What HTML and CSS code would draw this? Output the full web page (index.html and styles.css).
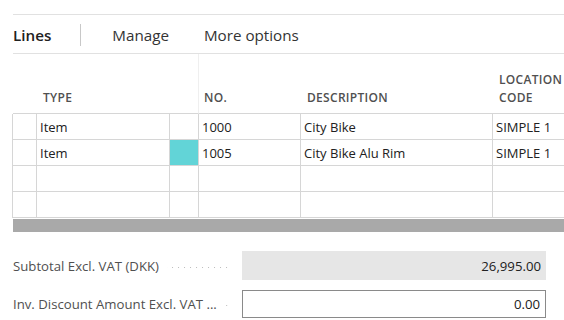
FILE: index.html
```html
<!DOCTYPE html>
<html lang="en">
<head>
    <meta charset="UTF-8">
    <title>Lines</title>
    <link rel="stylesheet" href="styles.css">
</head>
<body>

    <!-- Barra de acoes -->
    <div class="toolbar">
        <span class="tab active">Lines</span>
        <span class="divider"></span>
        <span class="tab">Manage</span>
        <span class="tab">More options</span>
    </div>

    <!-- Grade das linhas -->
    <div class="grid">
        <div class="head sel"></div>
        <div class="head">TYPE</div>
        <div class="head"></div>
        <div class="head ruled">NO.</div>
        <div class="head">DESCRIPTION</div>
        <div class="head">LOCATION<br>CODE</div>

        <div class="cell sel"></div>
        <div class="cell">Item</div>
        <div class="cell"></div>
        <div class="cell">1000</div>
        <div class="cell">City Bike</div>
        <div class="cell last">SIMPLE 1</div>

        <div class="cell sel"></div>
        <div class="cell">Item</div>
        <div class="cell marker"></div>
        <div class="cell">1005</div>
        <div class="cell">City Bike Alu Rim</div>
        <div class="cell last">SIMPLE 1</div>

        <div class="cell sel"></div>
        <div class="cell"></div>
        <div class="cell"></div>
        <div class="cell"></div>
        <div class="cell"></div>
        <div class="cell last"></div>

        <div class="cell sel"></div>
        <div class="cell"></div>
        <div class="cell"></div>
        <div class="cell"></div>
        <div class="cell"></div>
        <div class="cell last"></div>
    </div>
    <div class="scrollbar"></div>

    <!-- Totais -->
    <div class="totals">
        <div class="total-row">
            <span class="label">Subtotal Excl. VAT (DKK)</span>
            <span class="dots"></span>
            <span class="value readonly">26,995.00</span>
        </div>
        <div class="total-row">
            <span class="label">Inv. Discount Amount Excl. VAT ...</span>
            <span class="dots"></span>
            <span class="value input">0.00</span>
        </div>
    </div>

</body>
</html>
```

FILE: styles.css
```css
/* Pagina */
body {
    margin: 0;
    width: 564px;
    height: 320px;
    overflow: hidden;
    background: #fff;
    color: #212121;
    font-family: "Open Sans", "Noto Sans", sans-serif;
}

/* Barra de acoes */
.toolbar {
    display: flex;
    align-items: center;
    margin: 14px 0 0 13px;
    height: 37px;
    padding-top: 1px;
    border-top: 1px solid #e1e1e1;
    border-bottom: 1px solid #e1e1e1;
    font-size: 15.2px;
}

.tab {
    color: #333;
    margin-right: 35px;
}

.tab.active {
    font-weight: 600;
    color: #212121;
    margin-right: 0;
}

.divider {
    width: 1px;
    height: 22px;
    background: #c8c8c8;
    margin: 0 31px 0 29px;
}

/* Grade */
.grid {
    display: grid;
    grid-template-columns: 24px 133px 29px 102px 192px 71px;
    grid-template-rows: 60px repeat(4, 26px);
    margin-left: 13px;
}

.head {
    display: flex;
    align-items: flex-end;
    padding: 0 0 6px 6px;
    font-size: 12px;
    font-weight: 600;
    letter-spacing: 0.3px;
    color: #505050;
    line-height: 18px;
    border-bottom: 1px solid #d6d6d6;
    white-space: nowrap;
}

.head.ruled {
    border-left: 1px solid #efefef;
    margin-left: -1px;
    padding-left: 5px;
}

.cell {
    display: flex;
    align-items: center;
    padding: 1px 0 0 3px;
    font-size: 13px;
    border-right: 1px solid #d6d6d6;
    border-bottom: 1px solid #d6d6d6;
    white-space: nowrap;
}

.cell.sel {
    border-left: 1px solid #d6d6d6;
    margin-left: -1px;
}

.cell.last {
    border-right: none;
}

.cell.marker {
    background: #62d4d7;
}

.scrollbar {
    margin: 1px 0 0 13px;
    height: 13px;
    background: #a9a9a9;
}

/* Totais */
.totals {
    margin: 19px 0 0 13px;
}

.total-row {
    display: flex;
    align-items: center;
    width: 533px;
    height: 29px;
    margin-bottom: 9px;
    font-size: 13.2px;
}

.label {
    color: #505050;
    white-space: nowrap;
}

.dots {
    flex: 1;
    height: 1px;
    margin: 4px 10px 0 8px;
    background-image: linear-gradient(to right, #bdbdbd 1px, transparent 1px);
    background-size: 6px 1px;
    background-position: right;
}

.value {
    flex: none;
    width: 304px;
    height: 100%;
    box-sizing: border-box;
    display: flex;
    align-items: center;
    justify-content: flex-end;
    padding-right: 5px;
    color: #212121;
}

.value.readonly {
    background: #e6e6e6;
}

.value.input {
    border: 1px solid #8a8a8a;
    height: 28px;
}
```
